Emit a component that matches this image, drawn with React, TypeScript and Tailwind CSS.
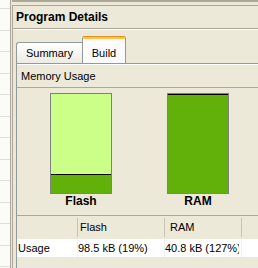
export default function App() {
  const rows = Array.from({ length: 12 });
  return (
    <div className="w-[258px] h-[268px] overflow-hidden bg-[#ece9d8] flex font-['Liberation_Sans',Arial,sans-serif] text-[11px] text-black">
      <div className="w-[11px] h-full shrink-0 bg-[#fbfbf8] border-r border-[#aca899] flex flex-col">
        <div className="h-[9px] shrink-0 border-b border-[#e2e0d6]" />
        {rows.map((_, i) => (
          <div key={i} className="h-[21.5px] shrink-0 border-b border-[#e2e0d6]" />
        ))}
      </div>
      <div className="w-px shrink-0" />
      <div className="flex-1 min-w-0 flex flex-col">
        <div className="h-[5px] shrink-0 border-t-2 border-[#aca899]" />
        <div className="flex-1 min-h-0 border-l border-t border-[#aca899] flex flex-col">
          <div className="h-[22px] shrink-0 flex items-center pl-[3px] font-bold text-[12px]">Program Details</div>
          <div className="h-px shrink-0 bg-[#aca899]" />
          <div className="h-px shrink-0 bg-white" />
          <div className="h-[33px] shrink-0 flex items-end pl-[3px]">
            <div className="w-[66px] h-[21px] border-l border-t border-[#919b9c] rounded-tl-[3px] bg-gradient-to-b from-white to-[#ecebe4] flex items-center justify-center pt-px">
              Summary
            </div>
            <div className="w-[44px] h-[27px] border-l border-r border-[#919b9c] rounded-t-[3px] bg-[#fcfcfe] flex flex-col">
              <div className="h-px bg-[#e68b2c] rounded-t-[3px]" />
              <div className="h-[2px] bg-[#ffc73c]" />
              <div className="flex-1 flex items-center justify-center pt-[4px]">Build</div>
            </div>
          </div>
          <div className="flex-1 min-h-0 ml-[3px] border-l border-t border-[#919b9c] flex flex-col">
            <div className="h-px shrink-0 bg-white" />
            <div className="h-[23px] shrink-0 flex items-center pl-[4px] border-b border-[#aca899]">Memory Usage</div>
            <div className="h-[128px] shrink-0 border-b border-[#aca899] flex pl-[33px] gap-[55px] pt-[5px]">
              <div className="flex flex-col items-center">
                <div className="w-[62px] h-[101px] border border-[#808080] flex flex-col">
                  <div className="flex-1 bg-[#ccff88]" />
                  <div className="h-[19px] bg-[#62b10a] border-t border-black" />
                </div>
                <div className="font-bold text-[12px] leading-[13px] mt-px">Flash</div>
              </div>
              <div className="flex flex-col items-center">
                <div className="w-[62px] h-[101px] border border-[#808080] flex flex-col">
                  <div className="flex-1 bg-[#62b10a] border-t border-black" />
                </div>
                <div className="font-bold text-[12px] leading-[13px] mt-px">RAM</div>
              </div>
            </div>
            <div className="h-[23px] shrink-0 flex">
              <div className="w-[60px] shrink-0" />
              <div className="w-px my-[2px] shrink-0 bg-[#c7c5b2]" />
              <div className="w-[86px] shrink-0 flex items-center pl-[2px]">Flash</div>
              <div className="w-px my-[2px] shrink-0 bg-[#c7c5b2]" />
              <div className="w-[76px] shrink-0 flex items-center pl-[5px]">RAM</div>
              <div className="w-px my-[2px] shrink-0 bg-[#c7c5b2]" />
              <div className="flex-1" />
            </div>
            <div className="h-[18px] shrink-0 flex bg-white whitespace-nowrap">
              <div className="w-[60px] shrink-0 flex items-center pl-[1px]">Usage</div>
              <div className="w-px shrink-0 bg-[#f0f0f0]" />
              <div className="w-[86px] shrink-0 flex items-center overflow-hidden">98.5 kB (19%)</div>
              <div className="w-px shrink-0 bg-[#f0f0f0]" />
              <div className="w-[74px] shrink-0 flex items-center overflow-hidden">40.8 kB (127%)</div>
              <div className="w-[2px] shrink-0" />
              <div className="w-px shrink-0 bg-[#f0f0f0]" />
              <div className="flex-1" />
            </div>
          </div>
        </div>
      </div>
    </div>
  );
}
